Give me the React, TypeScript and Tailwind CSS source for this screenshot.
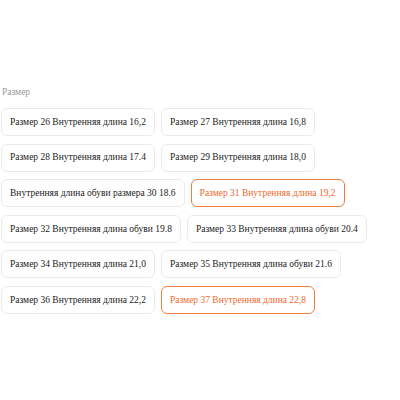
import React, { useState } from 'react';

const sizes = [
  'Размер 26 Внутренняя длина 16,2',
  'Размер 27 Внутренняя длина 16,8',
  'Размер 28 Внутренняя длина 17.4',
  'Размер 29 Внутренняя длина 18,0',
  'Внутренняя длина обуви размера 30 18.6',
  'Размер 31 Внутренняя длина 19,2',
  'Размер 32 Внутренняя длина обуви 19.8',
  'Размер 33 Внутренняя длина обуви 20.4',
  'Размер 34 Внутренняя длина 21,0',
  'Размер 35 Внутренняя длина обуви 21.6',
  'Размер 36 Внутренняя длина 22,2',
  'Размер 37 Внутренняя длина 22,8',
];

const rows = [
  [0, 1],
  [2, 3],
  [4, 5],
  [6, 7],
  [8, 9],
  [10, 11],
];

const SizeOption = ({ label, active, onClick }: { label: string; active: boolean; onClick: () => void }) => (
  <div
    role="button"
    onClick={onClick}
    className={
      active
        ? 'font-["Liberation_Serif"] cursor-pointer flex items-center h-[28px] px-[8px] rounded-[6px] border border-[#f07c3f] text-[#ef6a2c] text-[9.5px] whitespace-nowrap'
        : 'font-["Liberation_Serif"] cursor-pointer flex items-center h-[28px] px-[8px] rounded-[6px] border border-[#ebebeb] text-[#222222] text-[9.5px] whitespace-nowrap'
    }
  >
    {label}
  </div>
);

const App = () => {
  const [selected, setSelected] = useState<number[]>([5, 11]);

  const toggle = (i: number) => {
    setSelected(selected.includes(i) ? selected.filter(s => s !== i) : [...selected, i]);
  };

  return (
    <div className="font-['Liberation_Serif'] w-[400px] h-[400px] bg-white pt-[86px] pl-[1px]">
      <div className="text-[9.5px] text-[#9a9a9a] pl-[1px] leading-[12px]">Размер</div>
      <div className="mt-[10px] flex flex-col gap-[7.6px]">
        {rows.map((row, r) => (
          <div key={r} className="flex gap-[6px]">
            {row.map(i => (
              <SizeOption key={i} label={sizes[i]} active={selected.includes(i)} onClick={() => toggle(i)} />
            ))}
          </div>
        ))}
      </div>
    </div>
  );
};

export default App;
